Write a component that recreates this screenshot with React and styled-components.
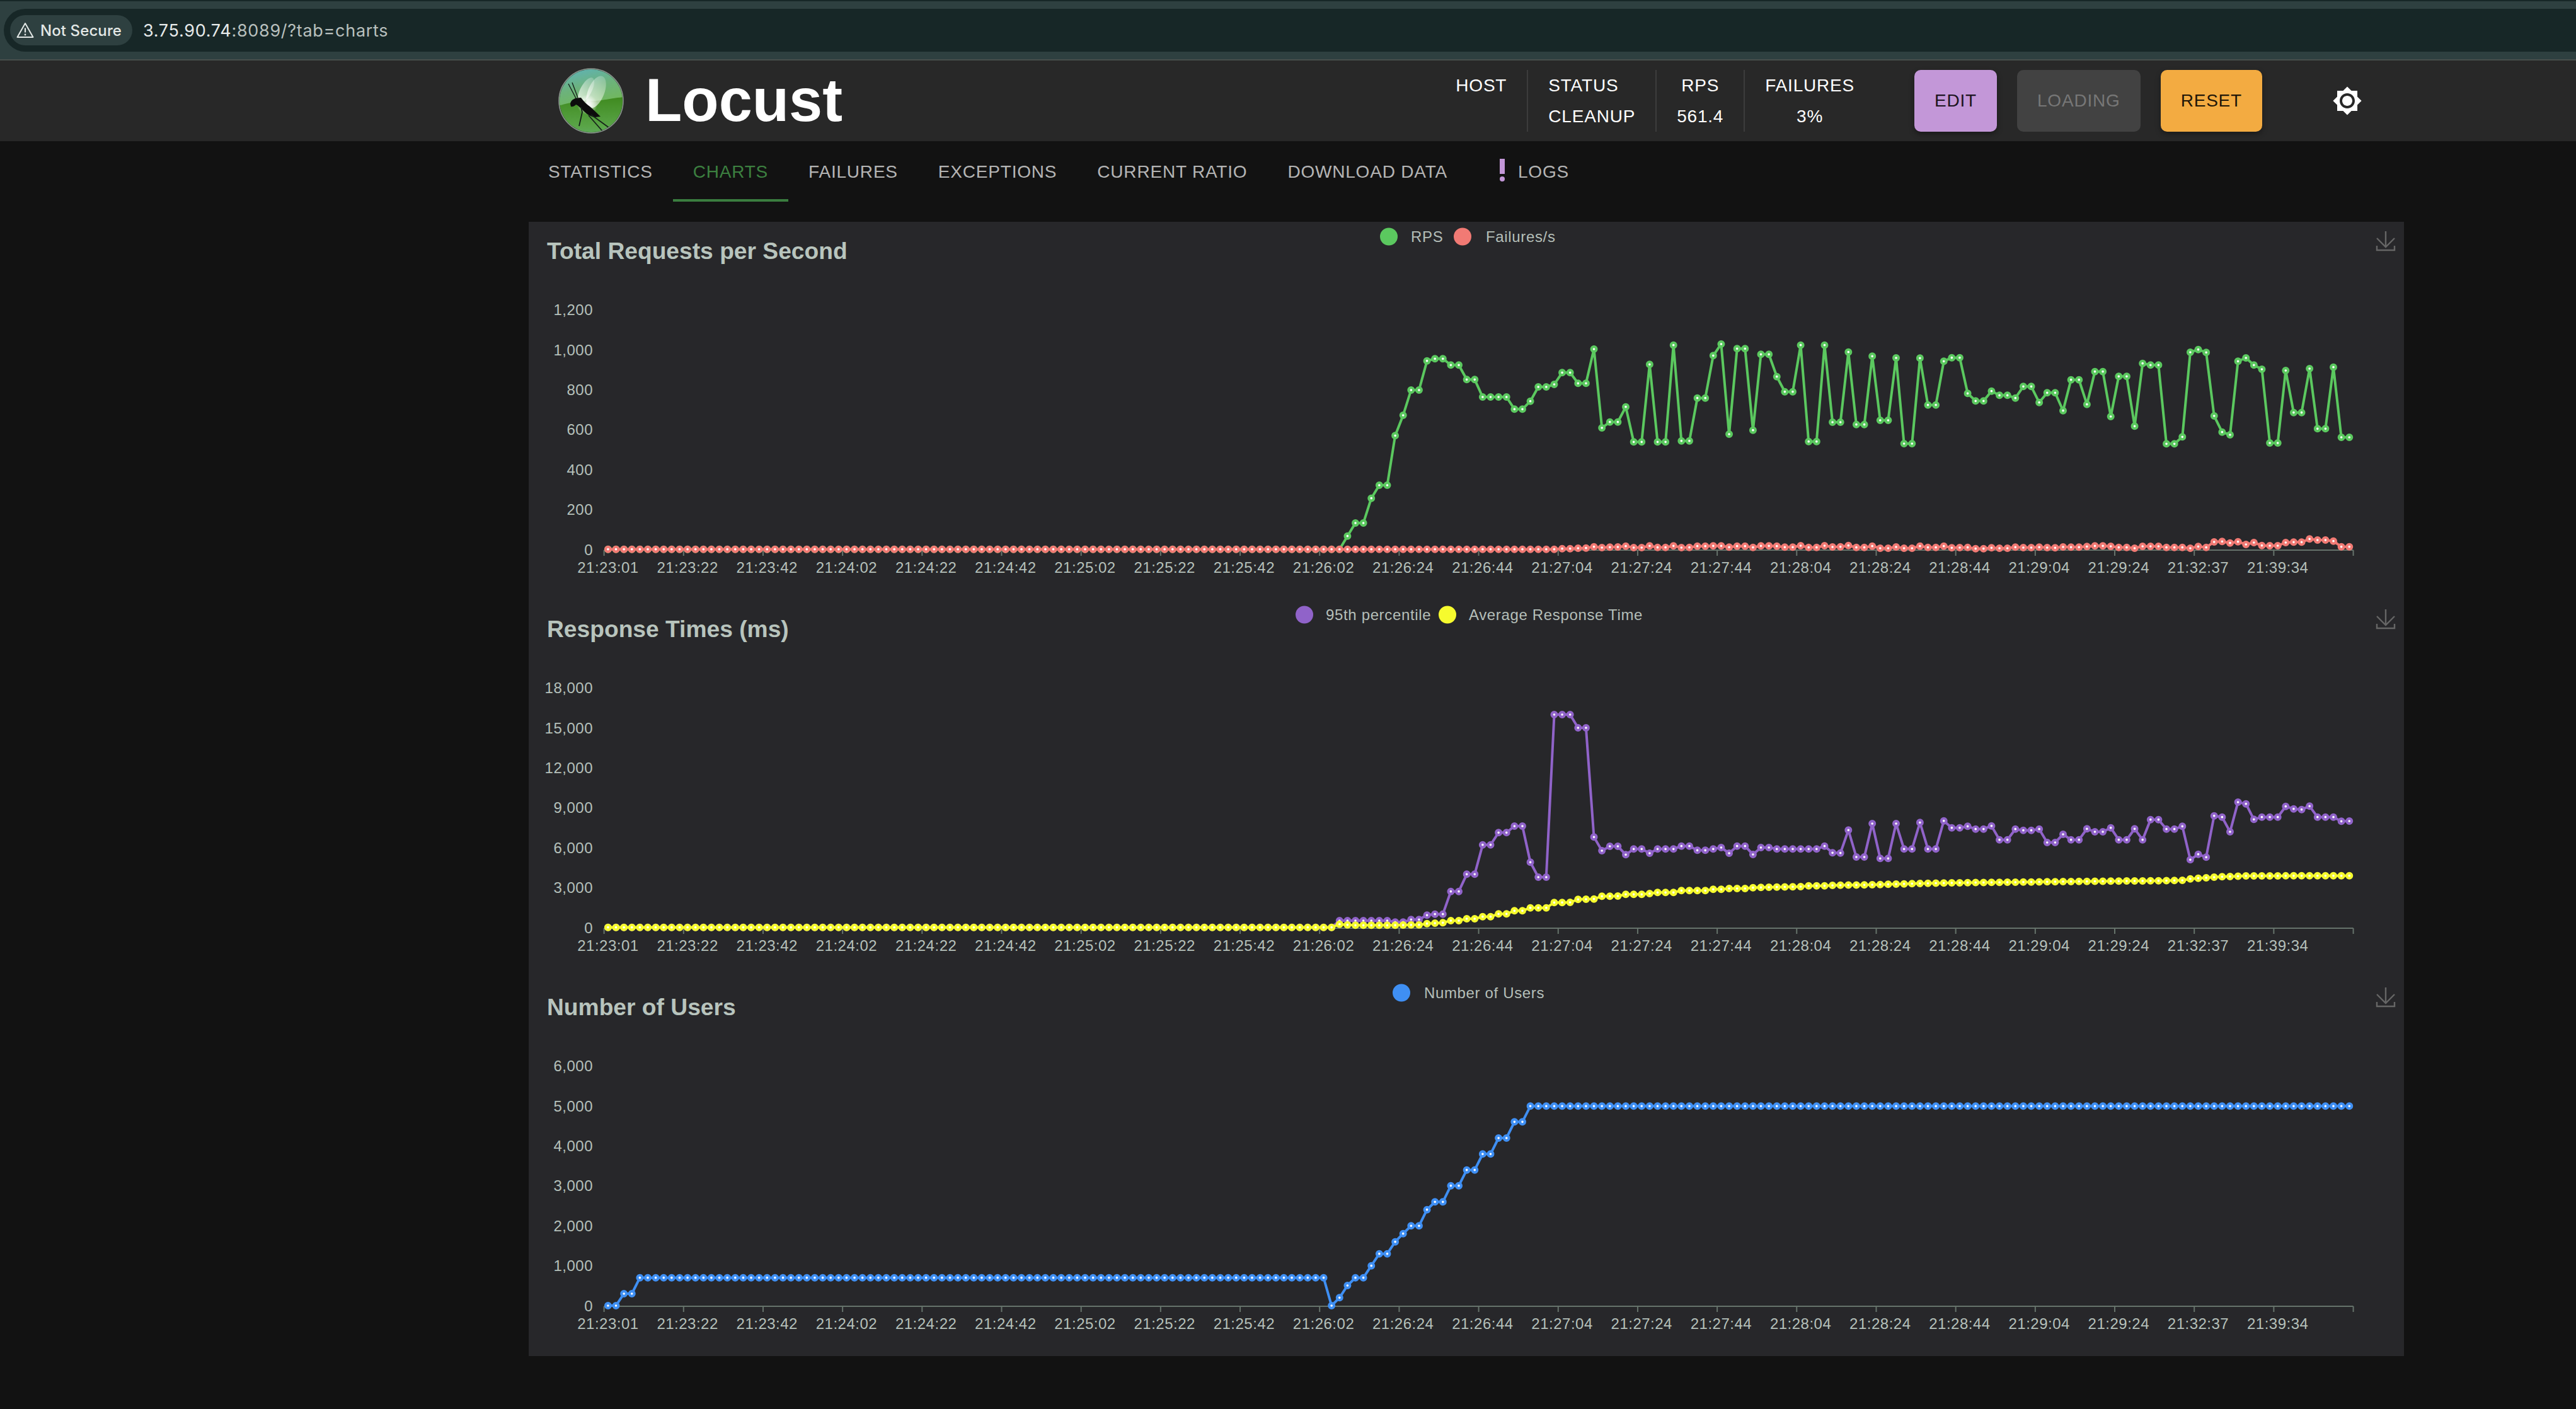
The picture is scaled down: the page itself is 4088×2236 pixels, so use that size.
import React from "react";
import styled, { createGlobalStyle } from "styled-components";

const GlobalStyle = createGlobalStyle`
  html, body { margin: 0; padding: 0; background: #121212; }
  body { font-family: "Liberation Sans", Arial, sans-serif; }
  * { box-sizing: border-box; }
`;

const Page = styled.div`
  min-height: 100vh;
  background: #121212;
  display: flex;
  flex-direction: column;
`;

/* ---------- browser bar ---------- */
const BrowserBar = styled.div`
  height: 96px;
  background: #2e4040;
  border-top: 2px solid #172727;
  border-bottom: 2px solid #474f4c;
  padding: 12px 0 12px 6px;
  display: flex;
`;
const AddressPill = styled.div`
  flex: 1;
  height: 68px;
  background: #172727;
  border-radius: 34px 0 0 34px;
  padding-left: 10px;
  display: flex;
  align-items: center;
  font-family: Inter, "Liberation Sans", sans-serif;
`;
const SecurityChip = styled.div`
  width: 194px;
  height: 48px;
  border-radius: 24px;
  background: #2e4040;
  display: flex;
  align-items: center;
  gap: 10px;
  padding-left: 10px;
  color: #e3e8e6;
  font-size: 24px;
  font-weight: 500;
  white-space: nowrap;
  letter-spacing: 0.1px;
`;
const UrlText = styled.div`
  margin-left: 17px;
  font-size: 27px;
  letter-spacing: 0.7px;
  color: #b9c0be;
  white-space: nowrap;
`;
const UrlHost = styled.span`
  color: #e6eaea;
`;

/* ---------- app header ---------- */
const Header = styled.header`
  height: 128px;
  background: #282828;
  display: flex;
  align-items: center;
  padding: 0 339px 0 886px;
`;
const Brand = styled.div`
  display: flex;
  align-items: center;
  gap: 34px;
`;
const BrandName = styled.div`
  font-size: 95.5px;
  font-weight: 700;
  color: #fff;
  line-height: 1;
`;
const StatGroup = styled.div`
  margin-left: auto;
  margin-right: 63px;
  display: flex;
  height: 98px;
`;
const Stat = styled.div`
  padding: 0 32px;
  display: flex;
  flex-direction: column;
  align-items: ${(p) => (p.$left ? "flex-start" : "center")};
  border-right: ${(p) => (p.$last ? "none" : "2px solid #3c3c3c")};
  color: #fff;
  font-size: 28px;
  line-height: 49px;
  letter-spacing: 0.8px;
  white-space: nowrap;
`;
const ActionRow = styled.div`
  display: flex;
  gap: 32px;
`;
const ActionButton = styled.button`
  height: 98px;
  padding: 0 32px;
  border: 0;
  border-radius: 10px;
  background: ${(p) => p.$bg};
  color: ${(p) => p.$fg};
  font: 400 28px "Liberation Sans", Arial, sans-serif;
  letter-spacing: 0.8px;
  box-shadow: ${(p) => (p.$flat ? "none" : "0 4px 8px rgba(0,0,0,.35)")};
`;
const ThemeIcon = styled.svg`
  width: 48px;
  height: 48px;
  margin-left: 111px;
  fill: #fff;
  flex: none;
`;

/* ---------- tabs ---------- */
const TabBar = styled.nav`
  height: 96px;
  padding-left: 838px;
  display: flex;
`;
const Tab = styled.div`
  height: 96px;
  padding: 6px 32px 0;
  display: flex;
  align-items: center;
  font-size: 28px;
  letter-spacing: 0.8px;
  white-space: nowrap;
  color: ${(p) => (p.$active ? "#3c8040" : "rgba(255,255,255,.7)")};
  border-bottom: 4px solid ${(p) => (p.$active ? "#3a7d3f" : "transparent")};
`;
const LogsMark = styled.svg`
  width: 48px;
  height: 48px;
  flex: none;
  fill: #c397d8;
  margin-top: -6px;
`;

/* ---------- charts ---------- */
const ChartPanel = styled.main`
  width: 2976px;
  margin: 32px 0 0 839px;
  background: #27272a;
`;
const ChartSvg = styled.svg`
  display: block;
  width: 2976px;
  height: 600px;
`;
const ChartTitle = styled.text`
  font: 700 37.2px "Liberation Sans", Arial, sans-serif;
  fill: #b8c4bd;
`;
const LegendLabel = styled.text`
  font: 400 24px "Liberation Sans", Arial, sans-serif;
  letter-spacing: 0.65px;
  fill: #b5bfb9;
  dominant-baseline: central;
`;
const AxisLabel = styled.text`
  font: 400 24px "Liberation Sans", Arial, sans-serif;
  letter-spacing: 0.5px;
  fill: #b5c0ba;
  text-anchor: ${(p) => p.$anchor};
  dominant-baseline: central;
`;
const AxisStroke = styled.path`
  fill: none;
  stroke: #66736b;
  stroke-width: 2;
`;
const SeriesLine = styled.polyline`
  fill: none;
  stroke-width: 4;
  stroke-linejoin: round;
`;
const SeriesDot = styled.circle`
  fill: #fff;
  stroke-width: 4.2;
`;
const SaveIcon = styled.path`
  fill: none;
  stroke: #666;
  stroke-width: 2.4;
`;

/* ---------- data ---------- */
const X_LABELS = [
  "21:23:01","21:23:22","21:23:42","21:24:02","21:24:22","21:24:42","21:25:02","21:25:22",
  "21:25:42","21:26:02","21:26:24","21:26:44","21:27:04","21:27:24","21:27:44","21:28:04",
  "21:28:24","21:28:44","21:29:04","21:29:24","21:32:37","21:39:34",
];
const flat = (n, v) => Array(n).fill(v);
const lerp = (keys) => {
  const out = [];
  for (let k = 0; k < keys.length - 1; k++) {
    const [a, va] = keys[k];
    const [b, vb] = keys[k + 1];
    for (let i = a; i < b; i++) out.push(va + ((vb - va) * (i - a)) / (b - a));
  }
  out.push(keys[keys.length - 1][1]);
  return out;
};

const rps = [
  ...flat(93, 1115),
  1052,990,990,872,810,810,574,477,357,357,218,208,208,238,238,307,307,390,390,390,390,448,448,410,342,342,330,274,274,325,325,162,
  537,509,509,437,604,604,235,604,604,143,599,599,395,395,193,138,567,160,160,548,187,187,293,365,365,143,602,602,143,
  510,510,176,521,521,196,501,501,204,612,612,205,428,428,220,203,203,373,409,409,362,382,382,395,340,340,416,370,370,455,308,308,
  425,269,269,483,292,292,529,230,238,238,613,613,580,177,164,178,480,557,570,220,204,238,258,609,609,264,464,464,255,541,541,248,582,582,
];
const failures = [
  ...flat(120, 1115),
  1112,1112,1110,1109,1103,1107,1105,1104,1100,1107,1107,1099,1106,1106,1099,1107,1106,1100,1100,1099,1099,1105,1100,1100,1106,1099,1099,1100,1105,1105,1098,1106,1106,1098,
  1104,1103,1097,1106,1106,1100,1110,1110,1104,1110,1110,1100,1106,1106,1100,1108,1107,1106,1112,1112,1108,1110,1110,1105,1107,1107,1105,1107,1108,1104,1105,1105,
  1102,1099,1099,1101,1106,1106,1110,1101,1101,1101,1106,1106,1106,1110,1102,1106,1080,1078,1085,1079,1092,1083,1097,1098,1098,1083,1081,1081,1066,1071,1071,1076,1103,1103,
];
const p95 = [
  ...flat(92, 1115),
  1083,1083,1083,1083,1083,1083,1083,1090,1090,1078,1078,1057,1052,1052,944,944,862,862,722,722,664,664,633,633,805,876,876,102,102,102,165,165,
  685,750,729,729,769,742,742,762,742,742,742,728,728,748,748,742,735,762,728,728,768,735,735,742,742,742,742,742,742,728,
  ...[460,461,352,480,480,321,487,487,321,442,442,316,442,442,308,341,341,334,347,347,332,398,398,347,353,353,347,411,411,372,398,398,
    346,360,360,341,398,398,346,398,302,302,347,347,334,493,467,481,284,290,360,219,227,301,290,290,290,239,251,254,238,290,290,290,310,309].map((z) => z + 300),
];
const avgResponse = lerp([
  [0,1115],[91,1115],[92,1100],[93,1103],[94,1105],[98,1105],[102,1103],[103,1097],[105,1093],[106,1083],[107,1083],[108,1074],[109,1074],
  [110,1064],[111,1064],[112,1051],[113,1051],[114,1036],[115,1036],[116,1022],[118,1022],[119,997],[121,996],[122,982],[124,980],[125,967],
  [127,966],[128,958],[130,958],[131,954],[132,949],[134,949],[135,940],[138,940],[139,934],[140,934],[141,930],[143,930],[144,926],[147,923],
  [150,921],[151,917],[153,917],[154,915],[159,912],[165,906],[171,902],[177,900],[183,897],[189,895],[195,893],[198,891],[199,884],[200,881],
  [203,874],[206,870],[219,869],
]);
const users = [
  1176,1176,1119,1119,...flat(87, 1043),
  1176,1138,1080,1043,1043,986,929,929,872,833,796,796,719,682,682,605,605,530,530,454,454,378,378,301,301,
  ...flat(104, 226),
];

const CHARTS = [
  {
    title: "Total Requests per Second",
    yLabels: ["0","200","400","600","800","1,000","1,200"],
    legend: [
      { name: "RPS", dot: 1365, text: 1400, color: "#5bc85f" },
      { name: "Failures/s", dot: 1482, text: 1519, color: "#f17a74" },
    ],
    base: 148,
    series: [
      { data: rps, color: "#5bc85f" },
      { data: failures, color: "#f17a74" },
    ],
  },
  {
    title: "Response Times (ms)",
    yLabels: ["0","3,000","6,000","9,000","12,000","15,000","18,000"],
    legend: [
      { name: "95th percentile", dot: 1231, text: 1265, color: "#9063c9" },
      { name: "Average Response Time", dot: 1458, text: 1492, color: "#f6fb2e" },
    ],
    base: 148,
    series: [
      { data: p95, color: "#9063c9" },
      { data: avgResponse, color: "#f6fb2e" },
    ],
  },
  {
    title: "Number of Users",
    yLabels: ["0","1,000","2,000","3,000","4,000","5,000","6,000"],
    legend: [{ name: "Number of Users", dot: 1385, text: 1421, color: "#3f8ff3" }],
    base: 128,
    series: [{ data: users, color: "#3f8ff3" }],
  },
];

const AXIS_X = 119.6;
const AXIS_Y = 521;
const STEP = 12.618;
const pointX = (i) => AXIS_X + STEP / 2 + STEP * i;

function Series({ data, color, base }) {
  const pts = data.map((z, i) => [pointX(i), base + z / 3]);
  return (
    <g>
      <SeriesLine stroke={color} points={pts.map((p) => p.map((n) => n.toFixed(1)).join(",")).join(" ")} />
      {pts.map(([x, y], i) => (
        <SeriesDot key={i} cx={x} cy={y} r={3.9} stroke={color} />
      ))}
    </g>
  );
}

function Chart({ title, yLabels, legend, series, base }) {
  const ticks = Array.from({ length: 23 }, (_, k) => AXIS_X + k * STEP * 10);
  return (
    <ChartSvg viewBox="0 0 2976 600">
      <ChartTitle x={29} y={59}>{title}</ChartTitle>
      {legend.map((l) => (
        <g key={l.name}>
          <circle cx={l.dot} cy={23.5} r={14} fill={l.color} />
          <LegendLabel x={l.text} y={23.5}>{l.name}</LegendLabel>
        </g>
      ))}
      <SaveIcon d="M2947 15v25M2933 26l14 14 14-14M2933 38v7h28v-7" />
      {yLabels.map((t, k) => (
        <AxisLabel key={t} $anchor="end" x={102} y={520 - 63.35 * k}>{t}</AxisLabel>
      ))}
      <AxisStroke d={`M${AXIS_X} ${AXIS_Y}H${AXIS_X + STEP * 220}`} />
      {ticks.map((x) => (
        <AxisStroke key={x} d={`M${x} ${AXIS_Y}v9`} />
      ))}
      {X_LABELS.map((t, k) => (
        <AxisLabel key={t} $anchor="middle" x={ticks[k] + STEP / 2} y={548}>{t}</AxisLabel>
      ))}
      {series.map((s) => (
        <Series key={s.color} data={s.data} color={s.color} base={base} />
      ))}
    </ChartSvg>
  );
}

function LocustLogo() {
  return (
    <svg width="104" height="104" viewBox="0 0 104 104">
      <defs>
        <linearGradient id="logoTop" x1="0.2" y1="0" x2="0.6" y2="1">
          <stop offset="0" stopColor="#5fb3b8" />
          <stop offset="0.5" stopColor="#6cb27c" />
          <stop offset="1" stopColor="#72b85a" />
        </linearGradient>
        <linearGradient id="logoBottom" x1="0" y1="0" x2="0" y2="1">
          <stop offset="0" stopColor="#3f8a1f" />
          <stop offset="0.45" stopColor="#5aa548" />
          <stop offset="1" stopColor="#6fc0a4" />
        </linearGradient>
        <linearGradient id="logoWing" x1="0.6" y1="0" x2="0.4" y2="1">
          <stop offset="0" stopColor="#fff" stopOpacity="0.2" />
          <stop offset="1" stopColor="#fff" stopOpacity="0.75" />
        </linearGradient>
        <radialGradient id="logoGlow" cx="0.5" cy="0.5" r="0.5">
          <stop offset="0" stopColor="#fff" stopOpacity="1" />
          <stop offset="0.35" stopColor="#fff" stopOpacity="0.75" />
          <stop offset="1" stopColor="#fff" stopOpacity="0" />
        </radialGradient>
        <clipPath id="logoClip"><circle cx="52" cy="52" r="50" /></clipPath>
      </defs>
      <circle cx="52" cy="52" r="51" fill="#2c3a30" stroke="#8f9a92" strokeWidth="1.5" />
      <g clipPath="url(#logoClip)">
        <rect width="104" height="104" fill="url(#logoBottom)" y="46" />
        <path d="M0 0H104V46C80 48 72 52 52 52S20 54 0 60Z" fill="url(#logoTop)" />
        <ellipse cx="44" cy="35" rx="9" ry="22" transform="rotate(28 44 35)" fill="url(#logoWing)" />
        <ellipse cx="60" cy="38" rx="13" ry="27" transform="rotate(22 60 38)" fill="url(#logoWing)" />
        <circle cx="46" cy="58" r="16" fill="url(#logoGlow)" />
        <path d="M16 25 28 48M22 23 31 47" stroke="#16221a" strokeWidth="1.4" fill="none" />
        <path d="M19 57C20 50 26 47 36 47 40 53 46 58 50 61 56 66 61 71 67 77L58 78C50 77 44 72 38 66 34 62 31 59 28 58 26 60 23 62 20 61Z" fill="#0c0c0c" />
        <path d="M36 62 38 70 33 92M52 74 81 95M48 75 70 100" stroke="#16221a" strokeWidth="1.8" fill="none" />
      </g>
    </svg>
  );
}

export default function App() {
  return (
    <Page>
      <GlobalStyle />
      <BrowserBar>
        <AddressPill>
          <SecurityChip>
            <svg width="28" height="26" viewBox="0 0 28 26" fill="none">
              <path d="M14 2 26.5 24H1.5Z" stroke="#e3e8e6" strokeWidth="2" strokeLinejoin="round" />
              <path d="M14 9.5v7" stroke="#e3e8e6" strokeWidth="2.2" />
              <circle cx="14" cy="20" r="1.4" fill="#e3e8e6" />
            </svg>
            Not Secure
          </SecurityChip>
          <UrlText><UrlHost>3.75.90.74</UrlHost>:8089/?tab=charts</UrlText>
        </AddressPill>
      </BrowserBar>

      <Header>
        <Brand>
          <LocustLogo />
          <BrandName>Locust</BrandName>
        </Brand>
        <StatGroup>
          <Stat><div>HOST</div></Stat>
          <Stat $left><div>STATUS</div><div>CLEANUP</div></Stat>
          <Stat><div>RPS</div><div>561.4</div></Stat>
          <Stat $last><div>FAILURES</div><div>3%</div></Stat>
        </StatGroup>
        <ActionRow>
          <ActionButton $bg="#c397d8" $fg="#1c1420">EDIT</ActionButton>
          <ActionButton $bg="#424242" $fg="#777" $flat>LOADING</ActionButton>
          <ActionButton $bg="#f3ab41" $fg="#1f1608">RESET</ActionButton>
        </ActionRow>
        <ThemeIcon viewBox="0 0 24 24">
          <path d="M20 8.69V4h-4.69L12 .69 8.69 4H4v4.69L.69 12 4 15.31V20h4.69L12 23.31 15.31 20H20v-4.69L23.31 12 20 8.69zM12 18c-3.31 0-6-2.69-6-6s2.69-6 6-6 6 2.69 6 6-2.69 6-6 6zm0-10c-2.21 0-4 1.79-4 4s1.79 4 4 4 4-1.79 4-4-1.79-4-4-4z" />
        </ThemeIcon>
      </Header>

      <TabBar>
        <Tab>STATISTICS</Tab>
        <Tab $active>CHARTS</Tab>
        <Tab>FAILURES</Tab>
        <Tab>EXCEPTIONS</Tab>
        <Tab>CURRENT RATIO</Tab>
        <Tab>DOWNLOAD DATA</Tab>
        <Tab>
          <LogsMark viewBox="0 0 48 48">
            <rect x="19" y="6" width="8" height="24" />
            <ellipse cx="23" cy="38" rx="4" ry="4" />
          </LogsMark>
          LOGS
        </Tab>
      </TabBar>

      <ChartPanel>
        {CHARTS.map((c) => (
          <Chart key={c.title} {...c} />
        ))}
      </ChartPanel>
    </Page>
  );
}
